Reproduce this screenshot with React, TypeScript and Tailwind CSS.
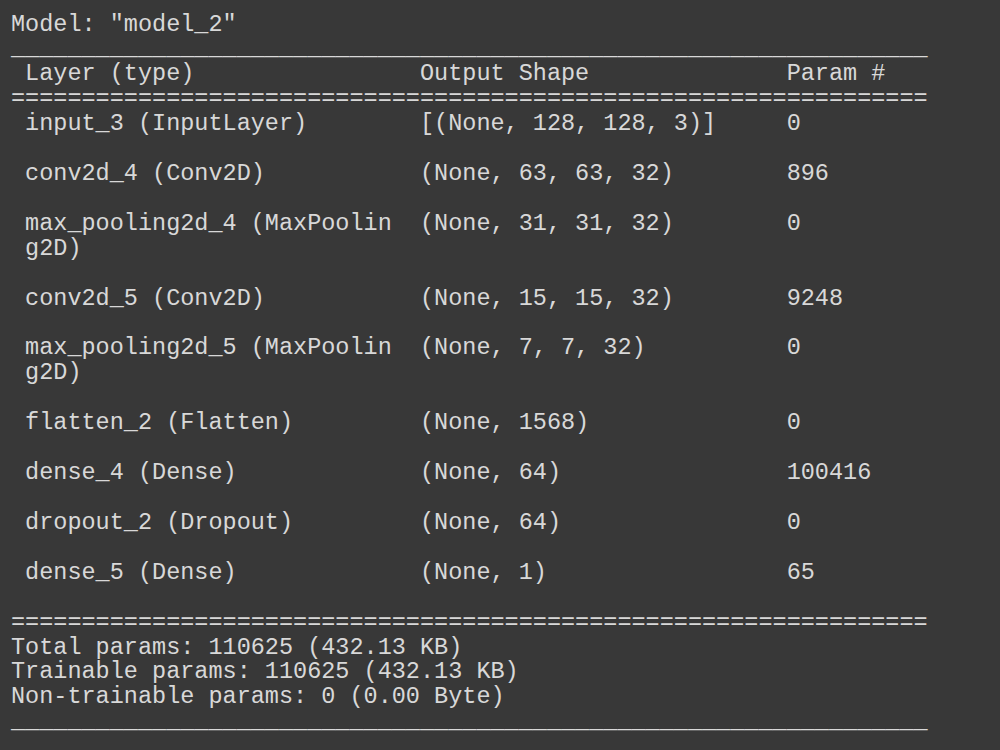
import React from "react";

const COL1 = 29;
const COL2 = 26;

type Layer = {
    name: string;
    shape: string;
    params: string;
};

const layers: Layer[] = [
    { name: "input_3 (InputLayer)", shape: "[(None, 128, 128, 3)]", params: "0" },
    { name: "conv2d_4 (Conv2D)", shape: "(None, 63, 63, 32)", params: "896" },
    { name: "max_pooling2d_4 (MaxPooling2D)", shape: "(None, 31, 31, 32)", params: "0" },
    { name: "conv2d_5 (Conv2D)", shape: "(None, 15, 15, 32)", params: "9248" },
    { name: "max_pooling2d_5 (MaxPooling2D)", shape: "(None, 7, 7, 32)", params: "0" },
    { name: "flatten_2 (Flatten)", shape: "(None, 1568)", params: "0" },
    { name: "dense_4 (Dense)", shape: "(None, 64)", params: "100416" },
    { name: "dropout_2 (Dropout)", shape: "(None, 64)", params: "0" },
    { name: "dense_5 (Dense)", shape: "(None, 1)", params: "65" },
];

function rowLines(layer: Layer): string[] {
    // keras wraps the name column at width - 2
    const max = COL1 - 3;
    const chunks: string[] = [];
    let rest = layer.name;
    while (rest.length > max) {
        chunks.push(rest.slice(0, max));
        rest = rest.slice(max);
    }
    chunks.push(rest);

    return chunks.map((chunk, i) =>
        i === 0
            ? (" " + chunk).padEnd(COL1) + layer.shape.padEnd(COL2) + layer.params
            : " " + chunk
    );
}

export default function App() {
    const lines: string[] = [];
    lines.push('Model: "model_2"');
    lines.push("_".repeat(65));
    lines.push(" Layer (type)".padEnd(COL1) + "Output Shape".padEnd(COL2) + "Param #");
    lines.push("=".repeat(65));
    layers.forEach((layer, i) => {
        lines.push(...rowLines(layer));
        if (i < layers.length - 1) lines.push("");
    });
    lines.push("");
    lines.push("=".repeat(65));
    lines.push("Total params: 110625 (432.13 KB)");
    lines.push("Trainable params: 110625 (432.13 KB)");
    lines.push("Non-trainable params: 0 (0.00 Byte)");
    lines.push("_".repeat(65));

    return (
        <div className="w-[1000px] h-[750px] bg-[#383838] overflow-hidden">
            <pre className="pt-[12.5px] pl-[11px] m-0 font-['Liberation_Mono',monospace] text-[23.5px] leading-[24.93px] text-[#d8d8d8] whitespace-pre">
                {lines.map((line, i) => (
                    <div key={i} className="h-[24.93px]">
                        {line}
                    </div>
                ))}
            </pre>
        </div>
    );
}
